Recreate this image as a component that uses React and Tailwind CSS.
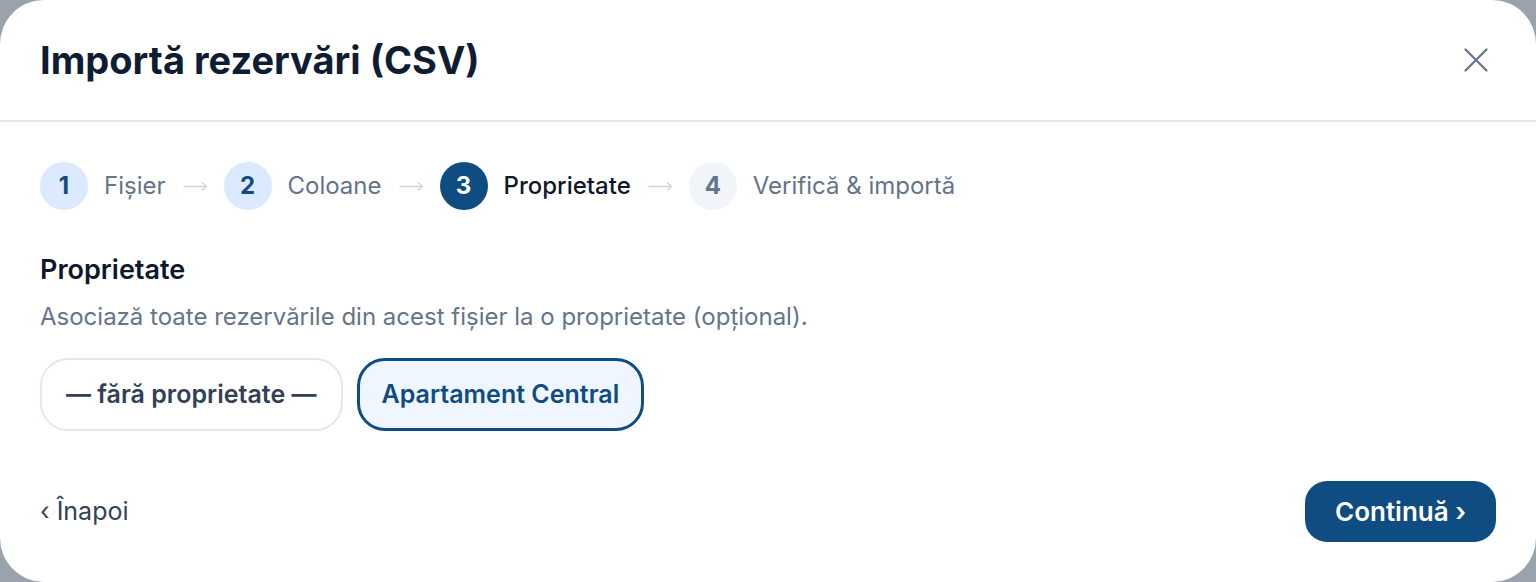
const steps = [
  { n: 1, label: 'Fișier', state: 'done' },
  { n: 2, label: 'Coloane', state: 'done' },
  { n: 3, label: 'Proprietate', state: 'active' },
  { n: 4, label: 'Verifică & importă', state: 'todo' },
]

function StepBadge({ n, state }) {
  const tone =
    state === 'active'
      ? 'bg-[#0f4c81] text-white'
      : state === 'done'
        ? 'bg-[#dbeafe] text-[#0f4c81]'
        : 'bg-[#f1f5f9] text-[#64748b]'
  return (
    <span className={`flex h-12 w-12 shrink-0 items-center justify-center rounded-full text-[24px] font-bold ${tone}`}>
      {n}
    </span>
  )
}

function CloseIcon() {
  return (
    <svg viewBox="0 0 24 24" className="h-6 w-6" fill="none" stroke="currentColor" strokeWidth="2.2" strokeLinecap="round">
      <path d="M1.5 1.5 22.5 22.5M22.5 1.5 1.5 22.5" />
    </svg>
  )
}

// thin separator arrow between steps
function StepArrow() {
  return (
    <svg viewBox="0 0 26 12" className="h-3 w-[26px] shrink-0 text-[#cbd5e1]" fill="none" stroke="currentColor" strokeWidth="1.3">
      <path d="M1.5 6.5h23M20 2.5l4.5 4-4.5 4" />
    </svg>
  )
}

export default function App() {
  return (
    <div className="min-h-[582px] bg-[#9aa2ad]" style={{ fontFamily: 'Inter, "Noto Sans", sans-serif' }}>
      <div className="flex h-[582px] flex-col rounded-[44px] bg-white">
        {/* Header */}
        <div className="flex h-[122px] shrink-0 items-center justify-between border-b-2 border-[#e5e7eb] pl-10 pr-[48px]">
          <h1 className="text-[38px] font-bold text-[#0f1d33]">Importă rezervări (CSV)</h1>
          <button className="flex h-6 w-6 items-center justify-center text-[#64748b]">
            <CloseIcon />
          </button>
        </div>

        {/* Body */}
        <div className="flex flex-1 flex-col px-10 pt-10">
          <div className="flex items-center gap-4">
            {steps.map((s, i) => (
              <div key={s.n} className="flex items-center gap-4">
                <StepBadge n={s.n} state={s.state} />
                <span
                  className={`text-[24px] ${s.state === 'active' ? 'font-medium text-[#0f172a]' : 'text-[#64748b]'}`}
                >
                  {s.label}
                </span>
                {i < steps.length - 1 && <StepArrow />}
              </div>
            ))}
          </div>

          <h2 className="mt-[44px] text-[27px] font-semibold leading-8 text-[#0f172a]">Proprietate</h2>
          <p className="mt-[15px] text-[24px] leading-8 text-[#64748b]">
            Asociază toate rezervările din acest fișier la o proprietate (opțional).
          </p>

          <div className="mt-[25px] flex items-center gap-[14px]">
            <button className="h-[73px] rounded-[28px] border-2 border-[#e2e8f0] bg-white px-6 text-[25px] font-semibold text-[#334155]">
              — fără proprietate —
            </button>
            <button className="h-[73px] rounded-[28px] border-[3px] border-[#0f4c81] bg-[#eff6ff] px-[22px] text-[25px] font-semibold text-[#0f4c81]">
              Apartament Central
            </button>
          </div>

          <div className="mt-auto flex items-center justify-between pb-10">
            <button className="text-[25px] text-[#334155]">‹ Înapoi</button>
            <button className="h-[61px] rounded-[22px] bg-[#0f4c81] px-[30px] text-[26px] font-semibold text-white">
              Continuă ›
            </button>
          </div>
        </div>
      </div>
    </div>
  )
}
